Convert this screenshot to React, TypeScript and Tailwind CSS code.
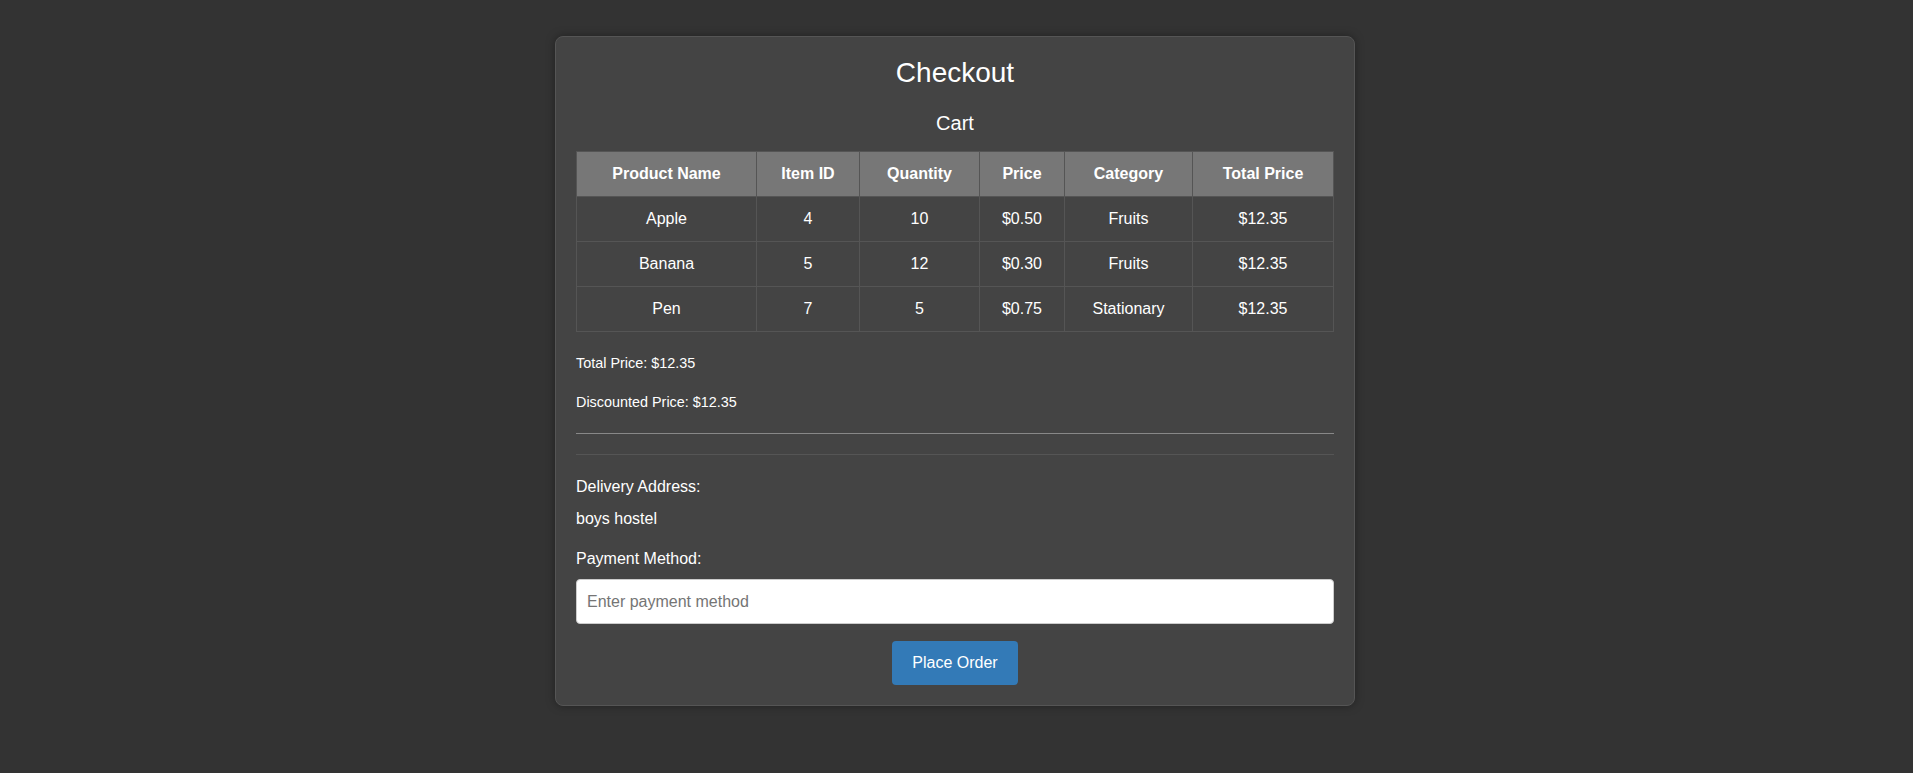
import React from "react";

const rows = [
  { name: "Apple", id: "4", qty: "10", price: "$0.50", cat: "Fruits", total: "$12.35" },
  { name: "Banana", id: "5", qty: "12", price: "$0.30", cat: "Fruits", total: "$12.35" },
  { name: "Pen", id: "7", qty: "5", price: "$0.75", cat: "Stationary", total: "$12.35" },
];

export default function App() {
  return (
    <div className="min-h-screen bg-[#333333] pt-[36px] pb-[40px] pr-[3px] font-['Liberation_Sans',Arial,sans-serif] text-white">
      <div className="mx-auto w-[800px] rounded-[8px] border border-[#555555] bg-[#444444] p-5 shadow-[0_0_10px_rgba(0,0,0,0.35)]">
        <h1 className="text-center text-[28px] leading-[32px] font-normal">Checkout</h1>
        <h2 className="mt-[22px] text-center text-[20px] leading-[24px] font-normal">Cart</h2>
        <table className="mt-[16px] w-full table-fixed border-collapse text-[16px] leading-[18px]">
          <thead>
            <tr className="bg-[#777777]">
              <th className="w-[180px] border border-[#555555] py-[13px] text-center font-bold">Product Name</th>
              <th className="w-[103px] border border-[#555555] py-[13px] text-center font-bold">Item ID</th>
              <th className="w-[120px] border border-[#555555] py-[13px] text-center font-bold">Quantity</th>
              <th className="w-[85px] border border-[#555555] py-[13px] text-center font-bold">Price</th>
              <th className="w-[128px] border border-[#555555] py-[13px] text-center font-bold">Category</th>
              <th className="border border-[#555555] py-[13px] text-center font-bold">Total Price</th>
            </tr>
          </thead>
          <tbody>
            {rows.map((r) => (
              <tr key={r.name}>
                <td className="border border-[#555555] py-[13px] text-center">{r.name}</td>
                <td className="border border-[#555555] py-[13px] text-center">{r.id}</td>
                <td className="border border-[#555555] py-[13px] text-center">{r.qty}</td>
                <td className="border border-[#555555] py-[13px] text-center">{r.price}</td>
                <td className="border border-[#555555] py-[13px] text-center">{r.cat}</td>
                <td className="border border-[#555555] py-[13px] text-center">{r.total}</td>
              </tr>
            ))}
          </tbody>
        </table>
        <p className="mt-[23px] text-[14.4px] leading-[16px]">Total Price: $12.35</p>
        <p className="mt-[23px] text-[14.4px] leading-[16px]">Discounted Price: $12.35</p>
        <div className="mt-[23px] h-px bg-[#888888]" />
        <div className="mt-[20px] border-t border-[#555555] pt-[23px]">
          <p className="text-[16px] leading-[18px]">Delivery Address:</p>
          <p className="mt-[14px] text-[16px] leading-[18px]">boys hostel</p>
          <p className="mt-[22px] text-[16px] leading-[18px]">Payment Method:</p>
          <input
            type="text"
            placeholder="Enter payment method"
            className="mt-[11px] block h-[45px] w-full rounded-[4px] border border-[#cccccc] bg-white px-[10px] text-[16px] text-black placeholder:text-[#757575] outline-none"
          />
          <div className="mt-[17px] flex justify-center">
            <button className="h-[44px] w-[126px] rounded-[4px] bg-[#337ab7] text-[16px] text-white">
              Place Order
            </button>
          </div>
        </div>
      </div>
    </div>
  );
}
